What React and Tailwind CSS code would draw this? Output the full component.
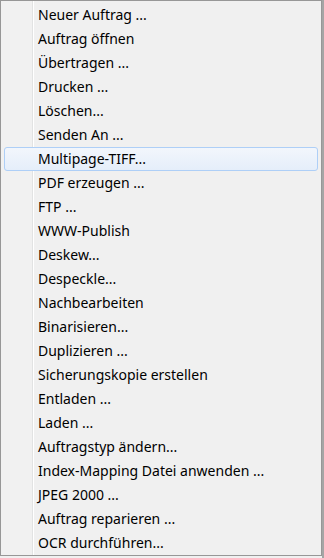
import React from 'react';

const items = [
  'Neuer Auftrag ...',
  'Auftrag öffnen',
  'Übertragen ...',
  'Drucken ...',
  'Löschen...',
  'Senden An ...',
  'Multipage-TIFF...',
  'PDF erzeugen ...',
  'FTP ...',
  'WWW-Publish',
  'Deskew...',
  'Despeckle...',
  'Nachbearbeiten',
  'Binarisieren...',
  'Duplizieren ...',
  'Sicherungskopie erstellen',
  'Entladen ...',
  'Laden ...',
  'Auftragstyp ändern...',
  'Index-Mapping Datei anwenden ...',
  'JPEG 2000 ...',
  'Auftrag reparieren ...',
  'OCR durchführen...',
];

const active = 'Multipage-TIFF...';

function MenuItem({ label }) {
  const on = label === active;
  return (
    <div
      className={
        on
          ? 'h-6 flex items-center pl-[33px] border border-[#aecff7] rounded-[3px] bg-[linear-gradient(to_bottom,#f2f6fc,#e5eefa)]'
          : 'h-6 flex items-center pl-[34px]'
      }
    >
      <span className="text-[14px] text-black leading-none">{label}</span>
    </div>
  );
}

export default function App() {
  return (
    <div
      className="w-[324px] h-[558px] flex bg-[#f0f0f0] overflow-hidden"
      style={{ fontFamily: '"Noto Sans", "Open Sans", sans-serif' }}
    >
      <div className="flex flex-col">
        <div className="w-[322px] h-[556px] border border-[#979797] py-[2px] px-[3px] bg-[linear-gradient(to_right,#f1f1f1_31px,#e2e3e3_31px,#e2e3e3_32px,#ffffff_32px,#ffffff_33px,#f0f0f0_33px)]">
          {items.map(label => (
            <MenuItem key={label} label={label} />
          ))}
        </div>
      </div>
      <div className="w-[2px] h-full bg-[#a5a5a5]" />
    </div>
  );
}
